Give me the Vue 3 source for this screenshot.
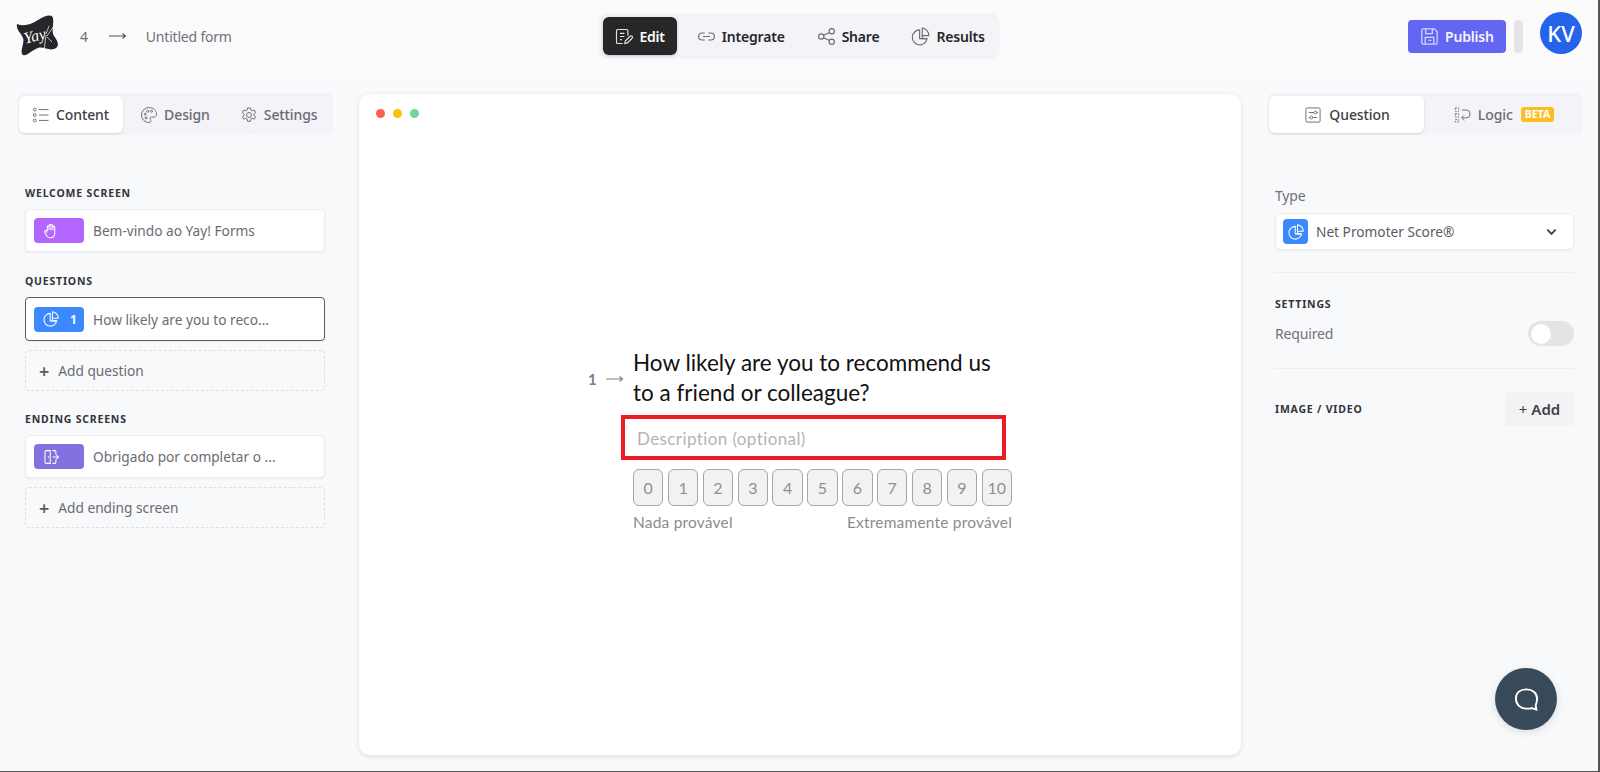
<template>
  <div class="page">
    <header class="topbar">
      <div class="top-left">
        <svg class="logo" viewBox="0 0 44 42">
          <path d="M1 9 C8 12 16 9 22 5 C28 1 36 -2 37 3 C38 10 35 16 38 21 C41 25 44 30 40 33 C34 37 28 31 22 33 C16 35 10 42 7 40 C3 37 9 28 7 23 C5 18 0 15 1 9 Z" fill="#26262a" />
          <text x="8" y="26" class="logo-text" transform="rotate(-14 20 22)">Yay</text>
          <path d="M28 36 L30 20 M30 19 L33 11 M31 21 L40 8 M31 22 L36 27" stroke="#fff" stroke-width="0.7" fill="none" />
        </svg>
        <span class="count">4</span>
        <svg class="long-arrow" viewBox="0 0 18 8"><path d="M0 4h16M13.5 1.5 16.5 4l-3 2.5" /></svg>
        <span class="form-name">Untitled form</span>
      </div>

      <nav class="top-nav">
        <a v-for="item in navItems" :key="item.label" class="nav-item" :class="{ active: item.active }">
          <svg viewBox="0 0 24 24" class="nav-icon" v-html="item.icon"></svg>
          {{ item.label }}
        </a>
      </nav>

      <div class="top-right">
        <button class="publish">
          <svg viewBox="0 0 24 24" class="publish-icon">
            <path d="M4 5.5A1.5 1.5 0 0 1 5.5 4H17l3 3v11.5a1.5 1.5 0 0 1-1.5 1.5h-13A1.5 1.5 0 0 1 4 18.5z" />
            <path d="M8 4v5h7V4M7.5 20v-7h9v7M11 16h3" />
          </svg>
          Publish
        </button>
        <span class="grey-bar"></span>
        <span class="avatar">KV</span>
      </div>
    </header>

    <main class="workspace">
      <aside class="left-panel">
        <div class="tabs">
          <a v-for="tab in leftTabs" :key="tab.label" class="tab" :class="{ active: tab.active }">
            <svg viewBox="0 0 24 24" class="tab-icon" v-html="tab.icon"></svg>
            {{ tab.label }}
          </a>
        </div>

        <div class="blocks">
          <h4 class="section first">WELCOME SCREEN</h4>
          <div class="block">
            <span class="chip purple"><svg viewBox="0 0 24 24" v-html="icons.hand"></svg></span>
            <span class="block-text">Bem-vindo ao Yay! Forms</span>
          </div>

          <h4 class="section">QUESTIONS</h4>
          <div class="block selected">
            <span class="chip blue"><svg viewBox="0 0 24 24" v-html="icons.pie"></svg><b>1</b></span>
            <span class="block-text">How likely are you to reco...</span>
          </div>
          <div class="add-block"><span class="plus">+</span> Add question</div>

          <h4 class="section ending">ENDING SCREENS</h4>
          <div class="block">
            <span class="chip violet"><svg viewBox="0 0 24 24" v-html="icons.exit"></svg></span>
            <span class="block-text">Obrigado por completar o ...</span>
          </div>
          <div class="add-block"><span class="plus">+</span> Add ending screen</div>
        </div>
      </aside>

      <section class="canvas">
        <div class="dots"><i class="red"></i><i class="yellow"></i><i class="green"></i></div>
        <div class="question">
          <div class="q-number">
            1
            <svg class="long-arrow small" viewBox="0 0 18 8"><path d="M0 4h16M13.5 1.5 16.5 4l-3 2.5" /></svg>
          </div>
          <div class="q-body">
            <h2 class="q-title">How likely are you to recommend us to a friend or colleague?</h2>
            <div class="q-desc">Description (optional)</div>
            <div class="scale">
              <span v-for="n in 11" :key="n" class="score">{{ n - 1 }}</span>
            </div>
            <div class="scale-labels">
              <span>Nada provável</span>
              <span>Extremamente provável</span>
            </div>
          </div>
        </div>
      </section>

      <aside class="right-panel">
        <div class="tabs right-tabs">
          <a class="tab active wide">
            <svg viewBox="0 0 24 24" class="tab-icon" v-html="icons.sliders"></svg>
            Question
          </a>
          <a class="tab wide">
            <svg viewBox="0 0 24 24" class="tab-icon" v-html="icons.logic"></svg>
            Logic
            <span class="beta">BETA</span>
          </a>
        </div>

        <div class="props">
          <div class="field-label">Type</div>
          <div class="select">
            <span class="chip blue square"><svg viewBox="0 0 24 24" v-html="icons.pie"></svg></span>
            <span class="select-text">Net Promoter Score®</span>
            <svg class="chevron" viewBox="0 0 12 8"><path d="M1.5 1.5 6 6l4.5-4.5" /></svg>
          </div>
          <hr class="rule first-rule" />
          <h4 class="section settings">SETTINGS</h4>
          <div class="row required">
            <span class="field-label">Required</span>
            <span class="toggle"><i></i></span>
          </div>
          <hr class="rule second-rule" />
          <div class="row media">
            <h4 class="section bare">IMAGE / VIDEO</h4>
            <button class="add-media"><span>+</span> Add</button>
          </div>
        </div>
      </aside>
    </main>

    <button class="chat">
      <svg viewBox="0 0 28 26"><path d="M14 2.5c6.5 0 11 3.8 11 9.5 0 2.8-.8 5.5-1.5 7.2l.7 4.3-4.7-1.600c-1.600.5-3.500.6-5.500.6-6.500 0-11-4.200-11-10.500S7.500 2.500 14 2.500z" /></svg>
    </button>
  </div>
</template>

<script setup>
const icons = {
  edit: '<path d="M17 11V5.5A1.5 1.5 0 0 0 15.5 4h-10A1.5 1.5 0 0 0 4 5.5v13A1.5 1.5 0 0 0 5.5 20H11"/><path d="M8 8.5h5M8 12h5M8 15.5h2"/><path d="m13.5 20 .7-3 5.3-5.3a1.4 1.4 0 0 1 2.3 2.3L16.5 19.3z"/>',
  link: '<path d="M10 8H7a4 4 0 0 0 0 8h3M14 8h3a4 4 0 0 1 0 8h-3M8 12h8"/>',
  share: '<circle cx="6" cy="12" r="3"/><circle cx="18" cy="6" r="3"/><circle cx="18" cy="18" r="3"/><path d="m8.7 10.7 6.6-3.4M8.7 13.3l6.6 3.4"/>',
  pie: '<path d="M11 4.5a8.5 8.5 0 1 0 8.5 10H11z"/><path d="M14 2.5a8 8 0 0 1 7.5 8.5H14z"/><path d="M14 11.5v3l5 0"/>',
  list: '<circle cx="4.5" cy="5.5" r="1.7"/><circle cx="4.5" cy="12" r="1.7"/><circle cx="4.5" cy="18.5" r="1.7"/><path d="M9.5 5.5H21M9.5 12H21M9.5 18.5H21"/>',
  palette: '<path d="M12 3a9 9 0 1 0 0 18c1.5 0 2.2-1 2.2-2 0-1.3-1-1.7-1-2.8 0-1 .8-1.7 1.800-1.700h2.500c2 0 3.500-1.500 3.500-3.500C21 6.500 17 3 12 3z"/><circle cx="7.500" cy="11" r="1.200"/><circle cx="10.500" cy="7.500" r="1.200"/><circle cx="15" cy="7.500" r="1.200"/><circle cx="8.500" cy="15.500" r="1.200"/>',
  gear: '<circle cx="12" cy="12" r="3"/><path d="M10.300 3.500h3.400l.5 2.500 1.700.9 2.400-.9 1.700 2.900-2 1.700v1.800l2 1.700-1.700 2.900-2.400-.9-1.700.9-.5 2.500h-3.400l-.5-2.500-1.700-.9-2.400.9-1.700-2.900 2-1.700v-1.800l-2-1.700 1.700-2.900 2.400.9 1.700-.9z"/>',
  sliders: '<rect x="3.500" y="3.500" width="17" height="17" rx="1.500"/><path d="M7 9h6M16.500 9H18M7 15h1.500M12 15h5"/><circle cx="15" cy="9" r="1.700"/><circle cx="10" cy="15" r="1.700"/>',
  logic: '<path d="M4 3.500h4v4H4zM4 10.500h4v4H4zM4 17.500h4v3H4z" stroke-dasharray="2 1.500"/><path d="M12 6h5a4 4 0 0 1 0 9.500h-5"/><path d="m14.500 12.500-3 3 3 3"/>',
  hand: '<path d="M7 12V6.500a1.200 1.200 0 0 1 2.500 0V11M9.500 11V4.500a1.200 1.200 0 0 1 2.500 0V11M12 11V5a1.200 1.200 0 0 1 2.500 0v6M14.500 11V7a1.200 1.200 0 0 1 2.500 0v7.500c0 4-2.500 6.500-6 6.500-3 0-4.500-1.500-6-4.500L3.500 13c-.5-1.300 1.500-2.300 2.300-1L7 14"/>',
  exit: '<path d="M11 3.500H5.500A1.500 1.500 0 0 0 4 5v14a1.500 1.500 0 0 0 1.500 1.500H11zM14 3.500h3a1.500 1.500 0 0 1 1.500 1.500v4M18.500 15v4a1.500 1.500 0 0 1-1.500 1.500h-3"/><path d="M8.500 11v2M14 12h8M19 9l3 3-3 3"/>',
}

const navItems = [
  { label: 'Edit', icon: icons.edit, active: true },
  { label: 'Integrate', icon: icons.link },
  { label: 'Share', icon: icons.share },
  { label: 'Results', icon: icons.pie },
]

const leftTabs = [
  { label: 'Content', icon: icons.list, active: true },
  { label: 'Design', icon: icons.palette },
  { label: 'Settings', icon: icons.gear },
]
</script>

<style>
body {
  margin: 0;
  background: #f9fafb;
}
</style>

<style scoped>
.page {
  position: relative;
  box-sizing: border-box;
  width: 1600px;
  height: 772px;
  overflow: hidden;
  background: linear-gradient(#fbfbfc, #f8f9fb 25%);
  border-right: 2px solid #555;
  border-bottom: 1px solid #555;
  font-family: "Noto Sans", sans-serif;
  color: #3f3f46;
}

.topbar {
  display: grid;
  grid-template-columns: 1fr auto 1fr;
  align-items: center;
  height: 72px;
}

.top-left {
  display: flex;
  align-items: center;
  padding-left: 16px;
  font-size: 14px;
  letter-spacing: -0.2px;
  color: #71717a;
}

.logo {
  width: 44px;
  height: 42px;
}

.logo-text {
  font-family: "Liberation Serif", serif;
  font-style: italic;
  font-size: 16px;
  fill: #fff;
}

.count {
  margin-left: 20px;
}

.long-arrow {
  width: 18px;
  height: 8px;
  margin: 0 19px 0 21px;
  fill: none;
  stroke: #52525b;
  stroke-width: 1.1;
}

.top-nav {
  display: flex;
  align-items: center;
  height: 46px;
  padding-left: 5px;
  background: #f3f3f8;
  border-radius: 10px;
}

.nav-item {
  display: flex;
  align-items: center;
  gap: 5px;
  height: 38px;
  padding: 0 15px 0 16px;
  font-size: 14px;
  letter-spacing: -0.2px;
  font-weight: 600;
  color: #27272a;
}

.nav-item.active {
  padding: 0 12px 0 10px;
  margin-right: 3px;
  background: #27272a;
  border-radius: 6px;
  color: #fff;
  box-shadow: 0 1px 3px rgba(0, 0, 0, 0.2);
}

.nav-icon {
  width: 21px;
  height: 21px;
  fill: none;
  stroke: #6b6b73;
  stroke-width: 1.3;
}

.active .nav-icon {
  stroke: #e4e4e7;
}

.top-right {
  display: flex;
  align-items: center;
  justify-content: flex-end;
  padding-right: 16px;
}

.publish {
  display: flex;
  align-items: center;
  gap: 4px;
  width: 98px;
  height: 33px;
  padding: 0 0 0 10px;
  border: 0;
  border-radius: 4px;
  background: #6366f1;
  font: 600 14px "Noto Sans", sans-serif;
  letter-spacing: -0.2px;
  color: #f4f4ff;
}

.publish-icon {
  width: 23px;
  height: 23px;
  fill: none;
  stroke: #d4d5fb;
  stroke-width: 1.3;
}

.grey-bar {
  width: 9px;
  height: 33px;
  margin-left: 8px;
  background: #e4e4e9;
  border-radius: 4px;
}

.avatar {
  display: flex;
  align-items: center;
  justify-content: center;
  width: 42px;
  height: 42px;
  margin: -6px 0 0 17px;
  border-radius: 50%;
  background: #2563eb;
  font-size: 22px;
  font-weight: 500;
  color: #fff;
}

.workspace {
  display: grid;
  grid-template-columns: 359px 882px 1fr;
}

.left-panel {
  padding: 21px 0 0 18px;
}

.tabs {
  display: flex;
  box-sizing: border-box;
  width: 315px;
  height: 42px;
  padding: 3px 1px 2px;
  background: #f3f3f8;
  border-radius: 6px;
}

.tab {
  display: flex;
  align-items: center;
  gap: 5px;
  padding: 0 13px 0 16px;
  font-size: 14px;
  letter-spacing: -0.1px;
  font-weight: 500;
  color: #6b6b73;
}

.tab.active {
  padding: 0 14px 0 12px;
  background: #fff;
  border-radius: 6px;
  color: #3f3f46;
  box-shadow: 0 1px 3px rgba(0, 0, 0, 0.12);
}

.tab.wide {
  justify-content: center;
  flex: 1;
  padding: 0;
  gap: 6px;
}

.tab-icon {
  width: 20px;
  height: 20px;
  fill: none;
  stroke: #71717a;
  stroke-width: 1.2;
}

.blocks {
  padding: 0 15px 0 7px;
  width: 300px;
}

.section {
  margin: 21px 0 8px;
  height: 16px;
  font-size: 10.5px;
  line-height: 16px;
  font-weight: 700;
  letter-spacing: 0.8px;
  color: #33333a;
}

.section.first {
  margin-top: 50px;
}

.section.ending {
  margin-top: 20px;
}

.block {
  display: flex;
  align-items: center;
  gap: 9px;
  box-sizing: border-box;
  height: 43px;
  padding: 0 8px;
  margin-bottom: 9px;
  background: #fff;
  border: 1px solid #ececf0;
  border-radius: 4px;
  box-shadow: 0 1px 2px rgba(0, 0, 0, 0.05);
}

.block.selected {
  height: 44px;
  border-color: #5b5b62;
}

.block-text {
  font-size: 13.7px;
  color: #6b6b73;
}

.chip {
  display: flex;
  align-items: center;
  flex: none;
  box-sizing: border-box;
  width: 50px;
  height: 25px;
  padding-left: 8px;
  border-radius: 4px;
}

.chip svg {
  width: 18px;
  height: 18px;
  fill: none;
  stroke: #fff;
  stroke-width: 1.4;
}

.chip b {
  margin-left: 10px;
  font-size: 12px;
  color: #fff;
}

.purple {
  background: #b366ff;
}

.blue {
  background: #3b88ff;
}

.violet {
  background: #8470de;
}

.chip.square {
  justify-content: center;
  width: 25px;
  padding: 0;
}

.add-block {
  display: flex;
  align-items: center;
  gap: 9px;
  box-sizing: border-box;
  height: 41px;
  padding-left: 13px;
  border: 1.5px dashed #dedee3;
  border-radius: 4px;
  font-size: 13.7px;
  color: #6b6b73;
}

.plus {
  font-size: 18px;
  font-weight: 600;
  line-height: 1;
  color: #5b5b62;
}

.canvas {
  position: relative;
  box-sizing: border-box;
  height: 661px;
  margin-top: 22px;
  padding-top: 254px;
  background: #fff;
  border-radius: 10px;
  box-shadow: 0 1px 5px rgba(0, 0, 0, 0.12);
}

.dots {
  position: absolute;
  top: 15px;
  left: 17px;
  display: flex;
  gap: 8px;
}

.dots i {
  width: 9px;
  height: 9px;
  border-radius: 50%;
}

.red {
  background: #ff5f4d;
}

.yellow {
  background: #ffc107;
}

.green {
  background: #6ed69b;
}

.question {
  display: flex;
  justify-content: center;
  font-family: "Lato", sans-serif;
}

.q-number {
  display: flex;
  align-items: center;
  width: 45px;
  height: 30px;
  margin-top: 16px;
  font-size: 15px;
  font-weight: 700;
  color: #808080;
}

.long-arrow.small {
  margin: 0 0 0 9px;
  stroke: #808080;
}

.q-body {
  width: 379px;
}

.q-title {
  margin: 0 0 7px;
  width: 372px;
  font-size: 22.5px;
  font-weight: 400;
  line-height: 30px;
  color: #111;
}

.q-desc {
  display: flex;
  align-items: center;
  box-sizing: border-box;
  width: 385px;
  height: 45px;
  padding: 1px 0 0 12px;
  margin-left: -12px;
  border: 4px solid #ed1c24;
  font-size: 17px;
  letter-spacing: 0.4px;
  color: #b4b4b4;
}

.scale {
  display: grid;
  grid-template-columns: repeat(11, 1fr);
  gap: 4.5px;
  margin-top: 9px;
}

.score {
  display: flex;
  align-items: center;
  justify-content: center;
  height: 35px;
  background: #f2f2f2;
  border: 1px solid #a6a6a6;
  border-radius: 6px;
  font-size: 16px;
  color: #8f8f8f;
}

.scale-labels {
  display: flex;
  justify-content: space-between;
  margin-top: 6px;
  font-size: 15.5px;
  letter-spacing: 0.2px;
  line-height: 20px;
  color: #8c8c8c;
}

.right-panel {
  padding: 21px 0 0 27px;
}

.right-tabs .tab.active {
  flex: none;
  width: 155px;
  padding: 0;
}

.beta {
  margin-left: 2px;
  padding: 0 4px;
  height: 15px;
  background: #fbbf24;
  border-radius: 3px;
  font-size: 10.5px;
  font-weight: 700;
  line-height: 15px;
  letter-spacing: 0;
  color: #fff;
}

.props {
  width: 299px;
  padding: 0 0 0 7px;
}

.field-label {
  font-size: 14px;
  letter-spacing: -0.15px;
  line-height: 20px;
  color: #71717a;
}

.props > .field-label {
  margin-top: 51px;
  margin-bottom: 7px;
}

.select {
  display: flex;
  align-items: center;
  box-sizing: border-box;
  height: 37px;
  padding: 0 16px 0 7px;
  background: #fff;
  border: 1px solid #ececf0;
  border-radius: 6px;
  box-shadow: 0 1px 2px rgba(0, 0, 0, 0.06);
}

.select-text {
  flex: 1;
  margin-left: 8px;
  font-size: 13.7px;
  color: #5b5b62;
}

.chevron {
  width: 11px;
  height: 8px;
  fill: none;
  stroke: #3f3f46;
  stroke-width: 2;
}

.rule {
  margin: 0;
  border: 0;
  border-top: 1px solid #eeeef1;
}

.first-rule {
  margin-top: 22px;
}

.settings {
  margin: 23px 0 0;
}

.row {
  display: flex;
  align-items: center;
  justify-content: space-between;
}

.required {
  margin-top: 9px;
}

.toggle {
  display: flex;
  align-items: center;
  box-sizing: border-box;
  width: 46px;
  height: 25px;
  padding-left: 3px;
  background: #e4e4e7;
  border-radius: 13px;
}

.toggle i {
  width: 20px;
  height: 20px;
  background: #fff;
  border-radius: 50%;
}

.second-rule {
  margin-top: 22px;
}

.media {
  margin-top: 23px;
}

.section.bare {
  margin: 0;
}

.add-media {
  width: 69px;
  height: 34px;
  border: 0;
  border-radius: 4px;
  background: #f3f3f6;
  font: 600 15px "Noto Sans", sans-serif;
  color: #3f3f46;
}

.add-media span {
  font-weight: 400;
}

.chat {
  position: absolute;
  left: 1495px;
  top: 668px;
  display: flex;
  align-items: center;
  justify-content: center;
  width: 62px;
  height: 62px;
  padding: 0;
  border: 0;
  border-radius: 50%;
  background: #384a59;
  box-shadow: 0 2px 8px rgba(0, 0, 0, 0.12);
}

.chat svg {
  width: 27px;
  height: 25px;
  fill: none;
  stroke: #fff;
  stroke-width: 2;
}
</style>
